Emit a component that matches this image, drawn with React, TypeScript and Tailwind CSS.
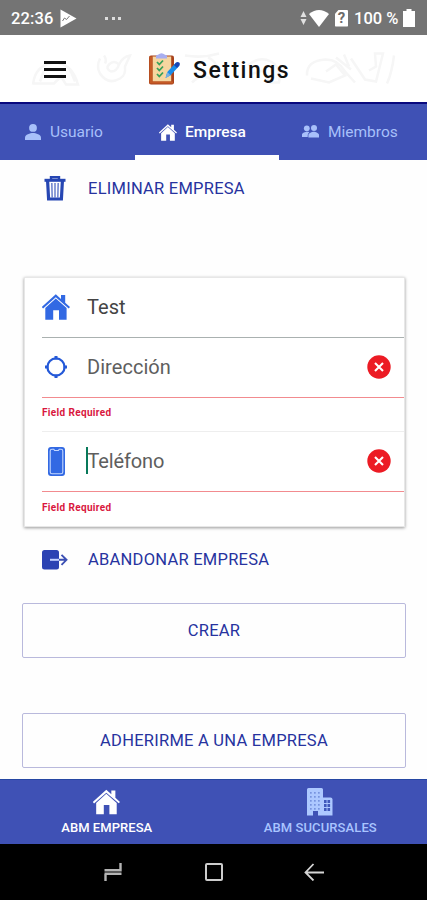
import React from "react";

type IconProps = { className?: string };

function HouseIcon({ className }: IconProps) {
  return (
    <svg viewBox="0 0 28 26" className={className} fill="currentColor">
      <path d="M13.8 0.3 19 4.900V1.100h4.200v7.600l4.800 4.200-1.300 1.500L13.800 3.300 1.100 14.500l-1.300-1.500z" />
      <path d="M13.800 4.500 24.600 14V25.700H17V16.200H11.200V25.700H3.300V14z" />
    </svg>
  );
}

function PersonIcon({ className }: IconProps) {
  return (
    <svg viewBox="0 0 16 16" className={className} fill="currentColor">
      <circle cx="8" cy="3.9" r="3.9" />
      <path d="M0 16v-2.6C0 10.6 5.2 9 8 9s8 1.6 8 4.4V16z" />
    </svg>
  );
}

function PeopleIcon({ className }: IconProps) {
  return (
    <svg viewBox="0 0 17 13" className={className} fill="currentColor">
      <circle cx="4.800" cy="3.300" r="2.900" />
      <circle cx="12" cy="3" r="3" />
      <path d="M0 12V9.800c0-2 3.300-3 5.200-3 .8 0 1.500.1 2.200.4C5.700 8.400 5.700 9.500 5.700 12z" />
      <path d="M6.400 12.400V10c0-2 3.600-3.300 5.400-3.300 1.700 0 5.200 1.300 5.200 3.300v2.400z" />
    </svg>
  );
}

function TrashIcon({ className }: IconProps) {
  return (
    <svg viewBox="0 0 22 25" className={className} fill="none" stroke="currentColor">
      <path d="M7 3V1.300h8V3" strokeWidth="2.400" />
      <path d="M0.500 4.300h21" strokeWidth="3" />
      <path d="M3.600 5l1 18h12.800l1-18" strokeWidth="3.200" />
      <path d="M7.800 7l.4 14.500M11 7v14.500M14.200 7l-.4 14.500" strokeWidth="1.600" opacity="0.650" />
    </svg>
  );
}

function LocateIcon({ className }: IconProps) {
  return (
    <svg viewBox="0 0 22 22" className={className} fill="none" stroke="currentColor" strokeWidth="2.200">
      <circle cx="11" cy="11" r="8.600" />
      <path d="M11 0v3.500M11 18.500V22M0 11h3.500M18.500 11H22" strokeWidth="3" />
    </svg>
  );
}

function PhoneIcon({ className }: IconProps) {
  return (
    <svg viewBox="0 0 17 29" className={className}>
      <rect width="17" height="29" rx="3" fill="#3269e3" />
      <path d="M4 2.200h1.800l.8 1.300h3.800l.8-1.300H13q1.800 0 1.800 1.800v21q0 1.800-1.800 1.800H4q-1.800 0-1.800-1.800V4Q2.200 2.200 4 2.200z" fill="#3269e3" stroke="#c4d7ff" strokeWidth="1.100" />
    </svg>
  );
}

function ExitIcon({ className }: IconProps) {
  return (
    <svg viewBox="0 0 26 20" className={className} fill="none">
      <rect width="17" height="19.500" rx="2.500" fill="#2c43b3" />
      <path d="M8 9.800h9" stroke="#c6d4ff" strokeWidth="2" />
      <path d="M17 9.800h7.500M19.500 4.800l5 5-5 5" stroke="#3c50b4" strokeWidth="1.900" />
    </svg>
  );
}

function ErrorIcon() {
  return (
    <svg viewBox="0 0 24 24" className="h-6 w-6">
      <circle cx="12" cy="12" r="11.700" fill="#ec1b24" />
      <path d="M8 8l8 8M16 8l-8 8" stroke="#fff" strokeWidth="2.100" />
    </svg>
  );
}

function BuildingIcon({ className }: IconProps) {
  return (
    <svg viewBox="0 0 26 28" className={className}>
      <path d="M1.500 0h13q1.500 0 1.500 1.500V27.500h-5V23H6v4.500H0V1.500Q0 0 1.500 0z" fill="#adc8ff" />
      <path d="M16 9.500h7.500q2 0 2 2v16H16z" fill="#adc8ff" />
      <g fill="#7793df">
        {[4, 8, 12, 16, 20].map((y) =>
          [3, 7, 11].map((x) => <rect key={`${x}-${y}`} x={x} y={y} width="1.700" height="1.700" />)
        )}
      </g>
      <g fill="#3f58bb">
        {[12, 16, 20].map((y) =>
          [17, 20.5].map((x) => <rect key={`${x}-${y}`} x={x} y={y} width="2.600" height="3" />)
        )}
      </g>
    </svg>
  );
}

function ClipboardIcon() {
  return (
    <svg viewBox="0 0 32 32" className="h-8 w-8">
      <rect x="1" y="2.500" width="25" height="29" rx="2" fill="#a8431c" />
      <path d="M4.500 3.500h18.700v25H4.500z" fill="#f6d6a0" />
      <path d="M1.500 3.500h3v25H25v2H1.500z" fill="#c65a25" />
      <path d="M8 5.500V3q0-1 2-1.200Q13.500-1.500 17 1.800q2 .2 2 1.200v2.500z" fill="#a8aef0" />
      <path d="M9 9l2.300 2.500L15 7.500M9 15l2.300 2.500L15 13.500M9 21l2.300 2.500L15 19.500" fill="none" stroke="#38a15a" strokeWidth="1.800" />
      <path d="M17.500 25l1.800-6L28 9.600l3.400 3.200-8.800 9.500z" fill="#198ce9" />
      <path d="M26 12l2.500-2.700q1.500-.9 2.700.3t.3 2.700L29 15z" fill="#1746b5" />
      <path d="M17.500 25l1.800-6 3.300 3.300z" fill="#7aaee0" />
    </svg>
  );
}

function Sketches() {
  return (
    <svg viewBox="0 0 427 66" className="absolute inset-0 h-full w-full" fill="none" stroke="#f6f6f6" strokeWidth="2.500">
      <path d="M33 49q2-20 22-22 17 1 23 22H66l-5-8-7 7H33M40 46l4-11M70 34l5 12" />
      <path d="M100 23q-4 8 0 15 8 12 20 5 6-3 5-12l5-11q-7 1-11 9-5-5-10 0-4 4 2 7 6 0 8-7M104 20q3 4 1 8" />
      <path d="M185 20q18 3 34-2M192 47q10-10 20-3M208 22q11 4 8 18M248 30q11-10 23-4 11 6 8 21h-9l-7-12-13 4" />
      <path d="M307 40q-1-15 19-16 12 0 19 12l10 11M311 43l18 4 16-7-9-11-10 7M336 22l15 12M344 19l5 12M351 23l14 21 11 2 7-28h-8l1 13-7 4M394 20q-2 17-7 28" />
    </svg>
  );
}

function StatusBar() {
  return (
    <div className="flex h-[35px] items-center bg-[#747474] pl-[11px] pr-[12px] pt-px text-white">
      <span className="w-[49px] pt-px text-[16.500px] font-medium leading-5 tracking-[0.100px]">22:36</span>
      <svg viewBox="0 0 17 19" className="h-[19px] w-[17px]">
        <path d="M0.500 0.500 16.500 9.500 0.500 18.500z" fill="#fff" />
        <path d="M2.500 12l2-3 2 1.500 3-3.500" fill="none" stroke="#777" strokeWidth="1" />
      </svg>
      <div className="ml-[28px] flex gap-[3.500px]">
        <i className="h-[3px] w-[3px] bg-[#ddd]" />
        <i className="h-[3px] w-[3px] bg-[#ddd]" />
        <i className="h-[3px] w-[3px] bg-[#ddd]" />
      </div>
      <svg viewBox="0 0 7 14" className="ml-auto h-[14px] w-[7px]" fill="#e0e0e0">
        <path d="M3.500 0 6.500 6h-6zM3.500 14 6.500 8h-6z" />
      </svg>
      <svg viewBox="0 0 20 17" className="ml-[2px] h-[17px] w-5" fill="#fff">
        <path d="M0 4Q10-4 20 4L10 17z" />
      </svg>
      <div className="ml-[6px] flex h-[17px] w-[13px] items-center justify-center rounded-[1px] bg-white text-[15px] font-bold leading-none text-[#6b6b6b] [clip-path:polygon(30%_0,100%_0,100%_100%,0_100%,0_25%)]">
        ?
      </div>
      <span className="ml-[6px] w-[49px] whitespace-nowrap pt-px text-[16.500px] font-medium leading-5">100 %</span>
      <svg viewBox="0 0 12 18" className="h-[18px] w-3" fill="#fff">
        <path d="M3.500 0h5v2H12v16H0V2h3.500z" />
      </svg>
    </div>
  );
}

type FieldProps = { icon: React.ReactNode; label: string; error?: boolean; focused?: boolean };

function Field({ icon, label, error, focused }: FieldProps) {
  return (
    <div className="ml-[17px] flex h-[60px] flex-col">
      <div className="flex h-[59px] items-center pb-px pr-[13px]">
        <div className="flex w-[28px] justify-center">{icon}</div>
        <div className={error ? "relative ml-[16px] flex-1 text-[20px] leading-7 text-[#5e5e5e]" : "relative ml-[16px] flex-1 text-[20px] leading-7 text-[#444]"}>
          {focused && <i className="absolute left-0 top-0 h-[27px] w-[2px] bg-[#08795a]" />}
          <span className={focused ? "ml-[1.500px] tracking-[-0.150px]" : "ml-px tracking-[0.050px]"}>{label}</span>
        </div>
        {error && <ErrorIcon />}
      </div>
      <div className={error ? "h-px bg-[#f28b8f]" : "h-px bg-[#aab1b0]"} />
    </div>
  );
}

export default function App() {
  return (
    <div className="flex h-[900px] w-[427px] flex-col overflow-hidden bg-white font-[Roboto,sans-serif]">
      <StatusBar />
      <header className="relative flex h-[67px] items-center pl-[44px] pt-[2px]">
        <Sketches />
        <div className="relative flex w-[22px] flex-col gap-[4px]">
          <i className="h-[3px] bg-[#111]" />
          <i className="h-[3px] bg-[#111]" />
          <i className="h-[3px] bg-[#111]" />
        </div>
        <div className="relative ml-[82px] pb-[2px]">
          <ClipboardIcon />
        </div>
        <h1 className="relative ml-[13px] pt-[2px] text-[23px] font-medium leading-7 tracking-[1.500px] text-[#111]">Settings</h1>
      </header>
      <nav className="flex h-[58px] border-t-2 border-[#08087e] bg-[#3f51b5] text-[15.500px] text-[#a8c0fa]">
        <div className="flex w-[135px] items-center pl-[25px]">
          <PersonIcon className="h-4 w-4" />
          <span className="ml-[9px] pt-[2px]">Usuario</span>
        </div>
        <div className="flex w-[144px] items-center border-b-[5px] border-white pl-[24px] pt-[5px] font-medium text-white">
          <HouseIcon className="h-[17px] w-[18px]" />
          <span className="ml-[8px] pt-px">Empresa</span>
        </div>
        <div className="flex flex-1 items-center pl-[23px]">
          <PeopleIcon className="mb-px h-[13px] w-[17px]" />
          <span className="ml-[9px] pt-[2px]">Miembros</span>
        </div>
      </nav>
      <main className="flex h-[619px] flex-col bg-[#fefefe] pl-[22px] pr-[21px]">
        <div className="flex h-[57px] items-center pl-[22px] text-[#27339f]">
          <TrashIcon className="h-[25px] w-[22px] text-[#2646b3]" />
          <span className="ml-[22px] pt-[2px] text-[16.500px] tracking-[0.250px]">ELIMINAR EMPRESA</span>
        </div>
        <section className="ml-[2px] mr-px mt-[60px] h-[250px] border border-[#e7e7e7] bg-white shadow-[0_1px_3px_rgba(0,0,0,0.4)]">
          <Field icon={<HouseIcon className="h-[26px] w-7 text-[#3269e3]" />} label="Test" />
          <Field icon={<LocateIcon className="h-[22px] w-[22px] text-[#2459d8]" />} label="Dirección" error />
          <div className="ml-[17px] flex h-[34px] items-center border-b border-[#eee] text-[10px] font-bold tracking-[0.350px] text-[#d9173e]">
            <span className="pb-[5px]">Field Required</span>
          </div>
          <Field icon={<PhoneIcon className="h-[29px] w-[17px]" />} label="Teléfono" error focused />
          <div className="ml-[17px] flex h-[32px] items-center text-[10px] font-bold tracking-[0.350px] text-[#d9173e]">
            <span className="pb-[2px]">Field Required</span>
          </div>
        </section>
        <div className="mt-[4px] flex h-[57px] items-center pl-[20px] text-[#27339f]">
          <ExitIcon className="h-5 w-[26px]" />
          <span className="ml-[20px] pt-[2px] text-[16.500px] tracking-[0.250px]">ABANDONAR EMPRESA</span>
        </div>
        <button className="mt-[15px] h-[55px] rounded-[2px] border-[1.500px] border-[#b9b9dc] pt-[2px] text-[16.500px] tracking-[0.250px] text-[#27339f]">CREAR</button>
        <button className="mt-[55px] h-[55px] rounded-[2px] border-[1.500px] border-[#b9b9dc] pt-[2px] text-[16.500px] tracking-[0.250px] text-[#27339f]">ADHERIRME A UNA EMPRESA</button>
      </main>
      <footer className="grid h-[65px] grid-cols-2 border-t border-[#2647a3] bg-[#3f51b5] text-[13px] font-medium leading-4">
        <div className="flex flex-col items-center pt-[9px] text-white">
          <HouseIcon className="h-[26px] w-[27px]" />
          <span className="mt-[5px] tracking-[0.050px]">ABM EMPRESA</span>
        </div>
        <div className="flex flex-col items-center pt-[8px] text-[#a9c4ff]">
          <BuildingIcon className="h-7 w-[26px]" />
          <span className="mt-[4px] tracking-[0.100px]">ABM SUCURSALES</span>
        </div>
      </footer>
      <div className="flex h-[56px] items-center bg-black pl-[104px]">
        <svg viewBox="0 0 18 18" className="h-[18px] w-[18px]" fill="none" stroke="#b4b4b4" strokeWidth="2.400">
          <path d="M16.500 0v7.200H0.500M0.500 10.800h17M1.500 18v-7" />
        </svg>
        <svg viewBox="0 0 18 18" className="ml-[83px] h-[18px] w-[18px]" fill="none" stroke="#ccc" strokeWidth="2">
          <rect x="1" y="1" width="16" height="16" rx="1" />
        </svg>
        <svg viewBox="0 0 20 18" className="ml-[81px] h-[18px] w-5" fill="none" stroke="#d5d5d5" strokeWidth="1.800">
          <path d="M20 9.500H1.500M9.500 1 1.500 9.500l8 8" />
        </svg>
      </div>
    </div>
  );
}
